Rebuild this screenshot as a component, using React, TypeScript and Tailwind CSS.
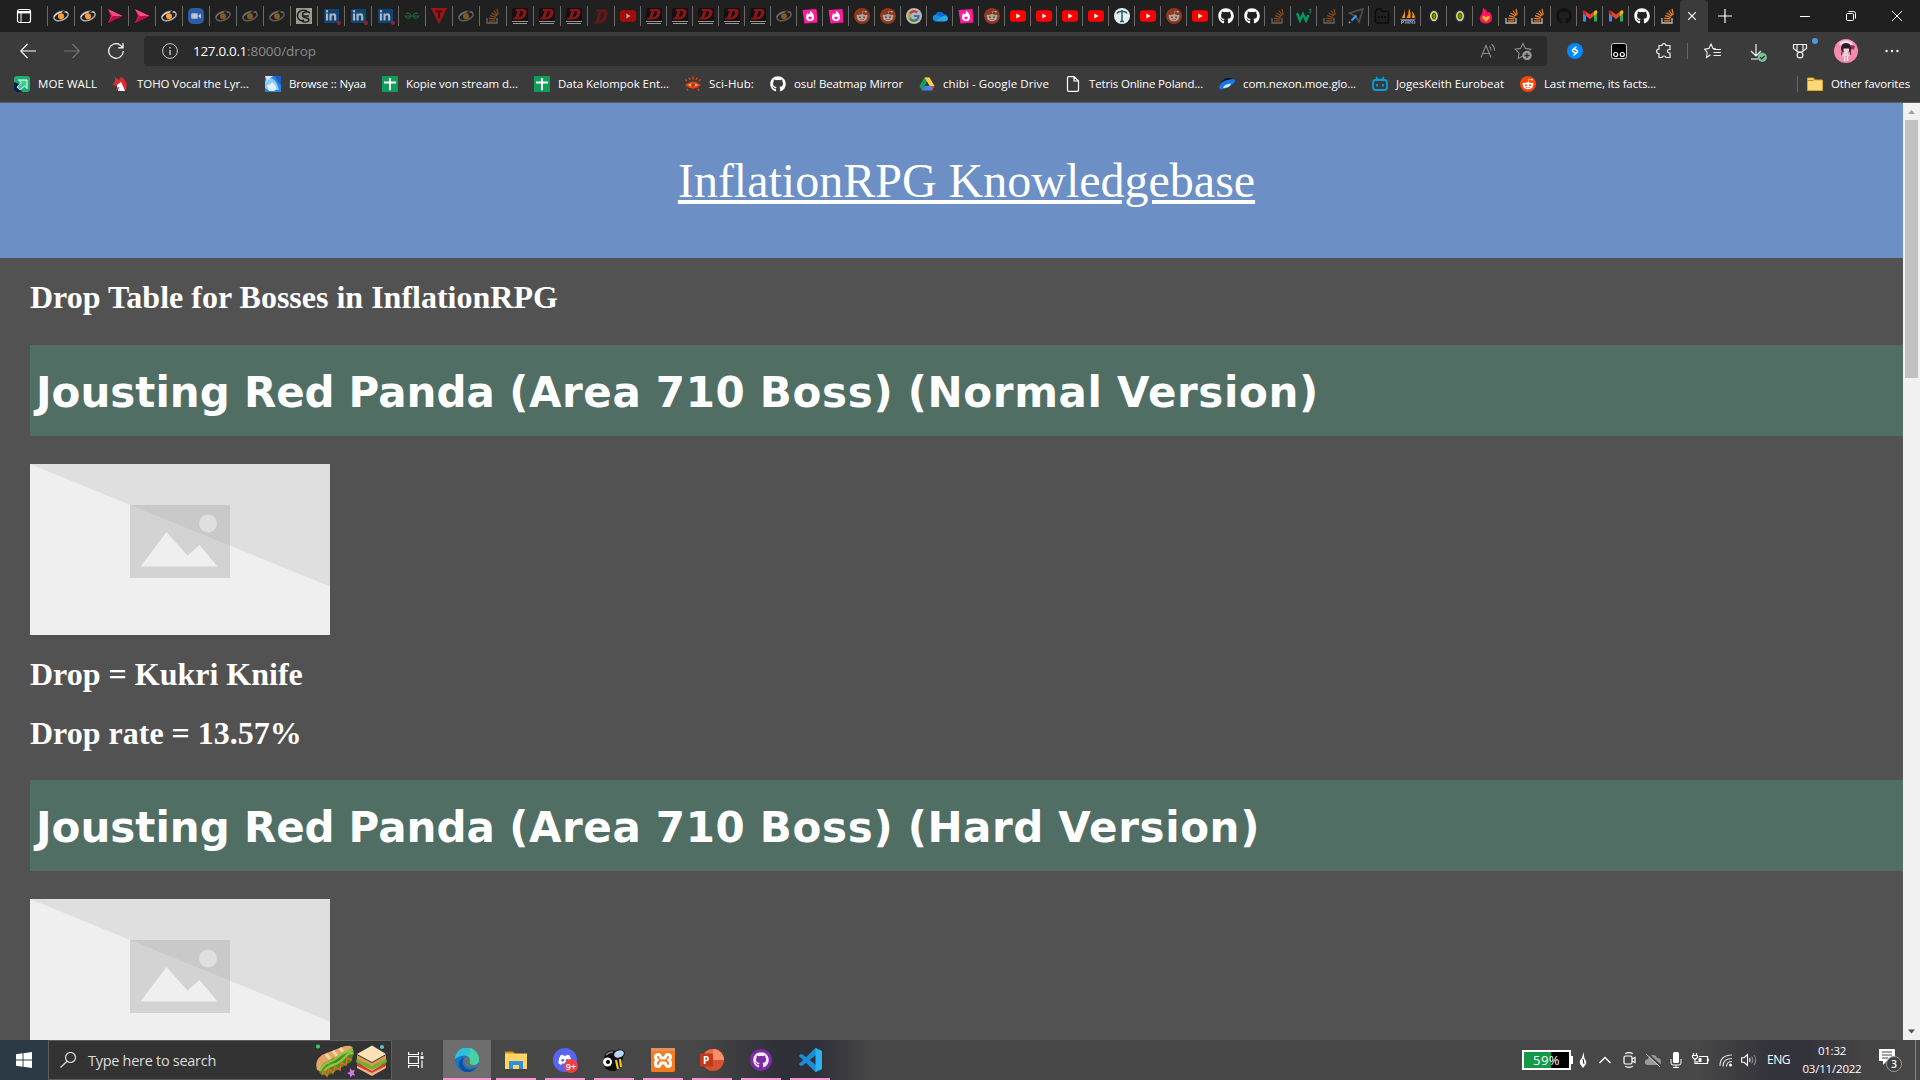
import React, { useLayoutEffect, useRef } from 'react';
import { FaGithub, FaRedditAlien, FaLinkedinIn } from 'react-icons/fa';

/* Single-line text whose tracking is tuned so the line has the given width. */
function FitText({ text, width, className = '' }: { text: string; width: number; className?: string }) {
  const ref = useRef<HTMLSpanElement>(null);
  useLayoutEffect(() => {
    const el = ref.current;
    if (!el) return;
    const fit = () => {
      el.style.letterSpacing = '0px';
      const natural = el.getBoundingClientRect().width;
      el.style.letterSpacing = `${(width - natural) / text.length}px`;
    };
    fit();
    document.fonts?.ready.then(fit);
  }, [text, width]);
  return (
    <span ref={ref} className={`inline-block shrink-0 whitespace-pre ${className}`}>
      {text}
    </span>
  );
}

/* ---------- favicons ---------- */

const Eye = ({ dim }: { dim?: boolean }) => (
  <svg viewBox="0 0 16 16" className={`size-4 ${dim ? 'opacity-45' : ''}`}>
    <g transform="rotate(-20 8 8)" fill="none">
      <ellipse cx="8" cy="8" rx="7.4" ry="4.3" stroke="#aaa" strokeWidth="1.5" />
      <path d="M1 6.6C3 4 12 3 15 7" stroke="#ddd" strokeWidth="1" />
    </g>
    <circle cx="8" cy="8.2" r="3" fill="#ff9d2e" />
    <path d="M14 1.5 9 4.5" stroke="#202020" strokeWidth="1.4" />
  </svg>
);

const Play = () => (
  <svg viewBox="0 0 16 16" className="size-4">
    <path d="M1 1.2 15.5 8 1 15l3-7Z" fill="#e8205c" />
    <path d="M1 1.2 15.5 8H6Z" fill="#ff4f82" />
    <path d="M1 15 6 8h9.5Z" fill="#b90d43" />
  </svg>
);

const Zoom = () => (
  <svg viewBox="0 0 16 16" className="size-4">
    <rect width="16" height="16" rx="5" fill="#2c5da8" />
    <rect x="3.2" y="5.2" width="6.6" height="5.6" rx="1.3" fill="#b9c3d2" />
    <path d="m10.4 7.2 2.6-1.7v5l-2.6-1.7Z" fill="#b9c3d2" />
  </svg>
);

const Monogram = () => (
  <svg viewBox="0 0 16 16" className="size-4">
    <rect width="16" height="16" fill="#9b9b94" />
    <g fill="none" stroke="#191919" strokeWidth="1.4">
      <path d="M11 3C6 .5 1 4 1.500 8S5 13.500 8 12" />
      <path d="M14 5C11 2.500 6 4 6.500 7.500s6 1.500 6.500 4-5 3.500-7 1.500M6 8h7" />
    </g>
  </svg>
);

const LinkedIn = () => (
  <span className="relative flex h-3.5 w-[15px] items-center justify-center bg-[#0e4478]">
    <FaLinkedinIn className="size-3 text-[#b0b4b8]" />
    <span className="absolute -right-0.5 -bottom-0.5 size-1 rounded-full bg-[#9c1e24]" />
  </span>
);

const Geeks = () => (
  <svg viewBox="0 0 16 16" className="size-4" fill="none" stroke="#1d5e33" strokeWidth="1.200">
    <path d="M2.300 5.800A2.600 2.600 0 1 1 1.500 8.200H14.500A2.600 2.600 0 1 1 13.700 5.800" />
  </svg>
);

const RedT = () => (
  <svg viewBox="0 0 16 16" className="size-4">
    <path d="M0 0h16L8 16Z" fill="#a01418" />
    <path d="M4.500 2.500h7v1.800H9v6H7v-6H4.500Z" fill="#3a0c0c" />
  </svg>
);

const Stack = ({ dim }: { dim?: boolean }) => (
  <svg viewBox="0 0 16 16" className={`size-4 ${dim ? 'opacity-45' : ''}`} fill="none">
    <path d="M2 10v5h10v-5" stroke="#bcbbbb" strokeWidth="1.3" />
    <path d="M4 12.800h6.300M4.200 10.300l6.200.6M5 7.700l5.900 1.700M6.500 5l5.200 3.100M8.900 2.500l3.600 4.800M12 .8l1.200 5.800" stroke="#f48024" strokeWidth="1.200" />
  </svg>
);

const Dee = ({ dim }: { dim?: boolean }) => (
  <svg viewBox="0 0 16 16" className={`size-4 ${dim ? 'opacity-60' : ''}`}>
    {!dim && <rect width="16" height="16" rx="2" fill="#111" />}
    <g transform={dim ? 'translate(0 0) scale(1 1.35)' : ''}>
      <path fillRule="evenodd" d="M4 1h7.500q4 .3 3 4-1.200 5.800-7 6.500H1l.6-2h1.600L5.500 3H3.400ZM8.700 3 6.400 9.500q3.600-.4 4.700-4.500.5-2-2.400-2Z" fill="#8d1418" />
    </g>
    {!dim && <path d="M0 13.500h16M1 15.500h14" stroke="#999" strokeWidth="1" />}
  </svg>
);

const YouTube = ({ dim }: { dim?: boolean }) => (
  <svg viewBox="0 0 16 16" className={`size-4 ${dim ? 'opacity-60' : ''}`}>
    <rect y="2.200" width="16" height="11.600" rx="2.800" fill="#f00" />
    <path d="m6.300 5.600 4.300 2.400-4.300 2.400Z" fill="#fff" />
  </svg>
);

const flame = 'M7.800 2.500c.8 2-.2 3-.9 4C6.300 6 6 5.600 5.800 5 4.500 6.500 4 7.800 4 9a4 4 0 0 0 8 .2C12.200 6.500 10.400 4.500 7.800 2.500Z';
const Tinder = () => (
  <svg viewBox="0 0 16 16" className="size-4">
    <path d="m.5 2 14-1 1 13.500-13 1Z" fill="#ff1d9b" />
    <path d={flame} fill="#fff" />
    <path d="M8 12 6.200 9.800q0-1.200 1-1.200L8 9.300l.8-.7q1 0 1 1.200Z" fill="#ff1d9b" />
  </svg>
);

const Flame = () => (
  <svg viewBox="0 0 16 16" className="size-4">
    <path d="M5 0c4 2 4 3.500 4.300 5L11 3.700c2.200 2 3.300 4 3 7a6.200 5.500 0 0 1-12.300 0C1.700 8 3.500 7 4 5.500 4.500 4 4.800 2 5 0Z" fill="#ff1464" />
    <path d="M8 14 4.300 10q-.3-2.200 1.700-2.200L8 9.300l2-1.500q2 0 1.700 2.200Z" fill="#ffb62a" />
  </svg>
);

const Reddit = ({ dim }: { dim?: boolean }) => (
  <span className={`flex size-4 items-center justify-center rounded-full ${dim ? 'bg-[#91371c] text-[#a9a9a9]' : 'bg-[#ff4500] text-white'}`}>
    <FaRedditAlien className="size-3" />
  </span>
);

const Google = () => (
  <svg viewBox="0 0 16 16" className="size-4 opacity-75" fill="none" strokeWidth="2.200">
    <circle cx="8" cy="8" r="8" fill="#e8e8e8" />
    <path d="M11.200 4.500A4.600 4.600 0 0 0 4 5.700" stroke="#ea4335" />
    <path d="M4 5.700a4.600 4.600 0 0 0 0 4.600" stroke="#fbbc05" />
    <path d="M4 10.300a4.600 4.600 0 0 0 7 1.300" stroke="#34a853" />
    <path d="M11 11.600A4.600 4.600 0 0 0 12.600 8H8" stroke="#4285f4" />
  </svg>
);

const OneDrive = () => (
  <svg viewBox="0 0 16 16" className="size-4">
    <path d="M3.500 13.200a3.400 3.400 0 0 1-.3-6.500A5 5 0 0 1 12 6a3.700 3.700 0 0 1 1 7.200Z" fill="#0a6fd0" />
    <path d="M3 13.200a3.400 3.400 0 0 1 .2-6.500q2 0 4 1.600l6 4.900Z" fill="#1490df" />
    <path d="M4 13.200 10 8.500q5-2 6 1.700a3 3 0 0 1-3 3Z" fill="#28a8ea" />
  </svg>
);

const RoundT = () => (
  <svg viewBox="0 0 16 16" className="size-4">
    <circle cx="8" cy="8" r="8" fill="#e4eef0" />
    <path d="M3 5.500q1-2.200 5-2.200t5 2.200M8 2v12M6 13.500h4" fill="none" stroke="#21605e" strokeWidth="1.500" />
  </svg>
);

const W3 = () => (
  <svg viewBox="0 0 16 16" className="size-4" fill="none" stroke="#059862">
    <path d="m1 5 3 7.500L7 6l3 6.500L12.500 7" strokeWidth="2.400" />
    <path d="M12.800 1.500h2.400l-1.300 1.400q1.500.2 1 1.600-.8 1-2.100.3" strokeWidth=".9" />
  </svg>
);

const Plane = () => (
  <svg viewBox="0 0 16 16" className="size-4" fill="none">
    <path d="M1.500 5 15 1l-4 13-3.300-5.500Z" stroke="#4a4f55" strokeWidth="1.800" />
    <path d="m8.500 7.500-5 5" stroke="#3ba0e8" strokeWidth="2" />
    <path d="m2.200 13.800-1.200 1.200" stroke="#3ba0e8" strokeWidth="2" />
  </svg>
);

const DarkFolder = () => (
  <svg viewBox="0 0 16 16" className="size-4" fill="none" stroke="#0c0c0c" strokeWidth="1.400">
    <path d="M1.700 3q0-2 2-2H7l1 2.500h5.500q1 0 1 1V13q0 2-2 2h-9q-2 0-2-2Z" />
    <path d="M4 9h2m1 0h2m1 0h2" strokeWidth="1.800" />
  </svg>
);

const Sails = () => (
  <svg viewBox="0 0 16 16" className="size-4">
    <path d="M5 1v9H1.500Q4 7 5 1ZM9 0q2.500 5 1.500 10H6.500Q9 6 9 0ZM12 3q3 3 3.300 7h-3.500Q13 7 12 3Z" fill="#f29111" />
    <path d="M0 11h16l-2 2H2Z" fill="#777a9a" />
    <path d="M1.500 16v-3.500h2v2h-2m4.300-2V16m2.400 0v-3.500M5.800 14.200h2.400M10 16v-3l1.300 1.500L12.700 13v3m2 0v-3" stroke="#9193b4" strokeWidth="1" fill="none" />
  </svg>
);

const YellowBadge = () => (
  <svg viewBox="0 0 16 16" className="size-4">
    <ellipse cx="8" cy="8" rx="4.600" ry="6" fill="#e9e225" stroke="#17247d" strokeWidth="1.300" />
    <ellipse cx="8" cy="8" rx="1.800" ry="3" fill="#8b8a25" stroke="#333b20" />
  </svg>
);

const Gmail = () => (
  <svg viewBox="0 0 16 16" className="size-4">
    <path d="M1 4v9.500h3V6Z" fill="#4285f4" />
    <path d="M12 6v7.500h3V4Z" fill="#34a853" />
    <path d="M12 3.500V8l3.300-3V4q0-2.500-2-1.600Z" fill="#fbbc04" />
    <path d="M4 3.500 8 6.600l4-3.100V8l-4 3-4-3Z" fill="#ea4335" />
    <path d="M.7 4v1L4 8V3.500L2.700 2.400Q.7 1.500.7 4Z" fill="#c5221f" />
  </svg>
);

const tabs: React.ReactNode[] = [
  <Eye />, <Eye />, <Play />, <Play />, <Eye />, <Zoom />, <Eye dim />, <Eye dim />, <Eye dim />, <Monogram />,
  <LinkedIn />, <LinkedIn />, <LinkedIn />, <Geeks />, <RedT />, <Eye dim />, <Stack dim />, <Dee />, <Dee />, <Dee />, <Dee dim />,
  <YouTube dim />, <Dee />, <Dee />, <Dee />, <Dee />, <Dee />, <Eye dim />, <Tinder />, <Tinder />, <Reddit dim />, <Reddit dim />,
  <Google />, <OneDrive />, <Tinder />, <Reddit dim />, <YouTube />, <YouTube />, <YouTube />, <YouTube />, <RoundT />, <YouTube />,
  <Reddit dim />, <YouTube />, <FaGithub className="size-4 text-white" />, <FaGithub className="size-4 text-white" />, <Stack dim />,
  <W3 />, <Stack dim />, <Plane />, <DarkFolder />, <Sails />, <YellowBadge />, <YellowBadge />, <Flame />, <Stack />, <Stack />,
  <FaGithub className="size-4 text-[#111]" />, <Gmail />, <Gmail />, <FaGithub className="size-4 text-white" />, <Stack />,
];

function TabStrip() {
  return (
    <div className="flex h-8 bg-[#202020]">
      <div className="flex w-[47px] shrink-0 items-center justify-center">
        <svg viewBox="0 0 16 16" className="size-4" fill="none" stroke="#fff">
          <rect x="1.500" y="1.500" width="13" height="13" rx="2" strokeWidth="1.200" />
          <path d="M1.500 4.200h13" strokeWidth="2.400" />
          <path d="M5 4.500v10" />
        </svg>
      </div>
      {tabs.map((icon, i) => (
        <div key={i} className={`flex h-8 shrink-0 items-center ${i < 21 ? 'w-[27px]' : 'w-[26px]'}`}>
          <div className="h-5 w-px bg-[#6a6a6a]" />
          <div className="flex flex-1 items-center justify-center">{icon}</div>
        </div>
      ))}
      <div className="flex w-7 shrink-0 items-center justify-center rounded-t-[4px] bg-[#3b3b3b] pr-1">
        <svg viewBox="0 0 8 8" className="size-2" stroke="#fff" strokeWidth="1.100"><path d="m0 0 8 8M8 0 0 8" /></svg>
      </div>
      <div className="ml-[10px] flex w-[15px] items-center">
        <svg viewBox="0 0 14 14" className="size-3.5" stroke="#fff" strokeWidth="1.200"><path d="M7 0v14M0 7h14" /></svg>
      </div>
      <div className="ml-auto flex items-center">
        <div className="flex w-[46px] justify-center"><div className="h-px w-2.5 bg-white" /></div>
        <div className="flex w-[46px] justify-center">
          <svg viewBox="0 0 10 10" className="size-2.5" fill="none" stroke="#fff"><rect x=".5" y="2.500" width="7" height="7" rx="1" /><path d="M2.500.5h5q2 0 2 2v5" /></svg>
        </div>
        <div className="flex w-[46px] justify-center">
          <svg viewBox="0 0 10 10" className="size-2.5" stroke="#fff"><path d="m0 0 10 10M10 0 0 10" /></svg>
        </div>
      </div>
    </div>
  );
}

function Toolbar() {
  return (
    <div className="flex h-[38px] items-center bg-[#3b3b3b] text-white">
      <div className="flex w-[144px] shrink-0 items-center pl-5">
        <svg viewBox="0 0 16 16" className="size-4" fill="none" stroke="#fff" strokeWidth="1.100"><path d="M16 8H.7M7.500 1 .7 8l6.800 7" /></svg>
        <svg viewBox="0 0 16 16" className="ml-7 size-4" fill="none" stroke="#777" strokeWidth="1.100"><path d="M0 8h15.300M8.500 1l6.800 7-6.800 7" /></svg>
        <svg viewBox="0 0 16 16" className="ml-7 size-4" fill="none" stroke="#fff" strokeWidth="1.200"><path d="M15.300 8A7.300 7.300 0 1 1 12 1.900l2.800 2.600M15 0v4.800h-4.800" /></svg>
      </div>
      <div className="flex h-[30px] w-[1403px] items-center rounded-[4px] bg-[#2b2b2b] pr-[15px] pl-[18px]">
        <svg viewBox="0 0 16 16" className="size-4" fill="none" stroke="#ccc"><circle cx="8" cy="8" r="7.400" /><path d="M8 7v5M8 4v1.600" strokeWidth="1.400" /></svg>
        <div className="ml-[15px] flex font-['Open_Sans',sans-serif] text-[13.5px] leading-5">
          <FitText text="127.0.0.1" width={54} />
          <FitText text=":8000/drop" width={69} className="text-[#8c8c8c]" />
        </div>
        <svg viewBox="0 0 16 16" className="ml-auto size-4" fill="none" stroke="#8c8c8c" strokeWidth="1.100"><path d="m1 14.500 5-12 5 12M2.800 10.500h6.400M9.500 3.500q1.800 1.500 1.500 4M11.500 1.200q3.200 2.300 3 6.500" /></svg>
        <svg viewBox="0 0 18 18" className="ml-[18px] size-[18px]" fill="none" stroke="#8c8c8c" strokeWidth="1.100">
          <path d="m9 14-4.800 2.500.9-5.400L1.200 7.200l5.300-.8L9 1.500l2.500 4.900 5.300.8-1.300 1.400" />
          <circle cx="13" cy="13.500" r="4.700" fill="#999" stroke="none" /><path d="M13 11v5M10.500 13.500h5" stroke="#2b2b2b" strokeWidth="1.300" />
        </svg>
      </div>
      <div className="flex flex-1 items-center pl-5">
        <span className="flex size-4 items-center justify-center rounded-full bg-[#08f]">
          <svg viewBox="0 0 12 12" className="size-3" fill="none" stroke="#fff" strokeWidth="1.500" strokeLinecap="round"><path d="M7 2 4.200 4.200q-1.500 1.400 0 2.500L6.500 8M5 10l2.800-2.200q1.500-1.400 0-2.500L5.500 4" /></svg>
        </span>
        <svg viewBox="0 0 16 16" className="ml-7 size-4"><rect x=".5" y=".5" width="15" height="15" rx="2" fill="#000" stroke="#ccc" /><g fill="none" stroke="#fff" strokeWidth="1.200"><circle cx="4.700" cy="11.500" r="2" /><circle cx="11.300" cy="11.500" r="2" /></g></svg>
        <svg viewBox="0 0 16 16" className="ml-[29px] size-4" fill="none" stroke="#eee" strokeWidth="1.200"><path d="M3 2.500h3Q6 .6 8 .6t2 1.900h4v4q-2.500-.2-2.500 1.700T14 10v4.500h-4q-.2-1.500-2-1.500t-2 1.500H3v-4Q.6 10.500.6 8.300T3 6.200Z" /></svg>
        <div className="ml-[15px] h-4 w-px bg-[#666]" />
        <svg viewBox="0 0 17 16" className="ml-4 h-4 w-[17px]" fill="none" stroke="#eee" strokeWidth="1.100"><path d="m6.500 11.800-4 2.700.7-5L.7 6.200l4.200-.8L7 1l2 4.400 3 .6M9.500 6.500H17M9.500 9.500H17M9.500 12.500H17" /></svg>
        <svg viewBox="0 0 18 18" className="ml-[28px] mt-1 size-[18px]" fill="none"><path d="M7 0v12M2 7l5 5 5-5M2 15h7" stroke="#fff" strokeWidth="1.100" /><circle cx="13.300" cy="13.300" r="4.600" fill="#74c38b" /><path d="m11.200 13.300 1.600 1.500 2.800-3" stroke="#224" strokeWidth="1.200" /></svg>
        <span className="relative ml-[25px]">
          <svg viewBox="0 0 16 16" className="size-4" fill="none" stroke="#eee" strokeWidth="1.200"><path d="M1.500 1.500h13v4L10 9H6L1.500 5.500ZM5 1.500V8m6-6.500V8" /><circle cx="8" cy="12" r="2.900" /></svg>
          <span className="absolute -top-[5px] left-[20px] size-1.5 rounded-full bg-[#4b9adb]" />
        </span>
        <svg viewBox="0 0 24 24" className="ml-[26px] size-6">
          <circle cx="12" cy="12" r="12" fill="#f48bac" />
          <path d="M5 4.500q7-6.500 14 0l-1 2Q12 1 6 6.500Z" fill="#f4dfe8" />
          <path d="M7 10Q7 4 12 4t5.500 6L16 13H8Z" fill="#2a1d2b" />
          <path d="M9.500 9.500h5.500v3q-2.700 1.500-5.500 0Z" fill="#f1d3d6" />
          <path d="m10.500 13-2.500 4.500 4-.5 4 .5-2.500-4.500Z" fill="#e6d2e3" /><path d="m17 6 4 1-1.500 4-3-2Z" fill="#9b2463" />
          <path d="M8.500 10.500 7.500 16m8.500-5.500 1 5.500" stroke="#4a2b45" />
          <path d="M10.700 17.500V22m2.800-4.500V22" stroke="#fff" strokeWidth="1.300" />
        </svg>
        <svg viewBox="0 0 14 4" className="ml-[27px] h-1 w-3.5" fill="#eee"><circle cx="1.600" cy="2" r="1.200" /><circle cx="7" cy="2" r="1.200" /><circle cx="12.400" cy="2" r="1.200" /></svg>
      </div>
    </div>
  );
}

/* ---------- bookmarks ---------- */

const Sheet = () => (
  <svg viewBox="0 0 16 16" className="size-4"><rect width="16" height="16" rx="1" fill="#0f9d58" /><path d="M8 2.200v12M2 6.500h12" stroke="#fff" strokeWidth="2" /></svg>
);

const bookmarks: { icon: React.ReactNode; text: string; width: number; cell: string; gap: string }[] = [
  { text: 'MOE WALL', width: 59, cell: 'w-[99px]', gap: 'gap-2', icon: <svg viewBox="0 0 16 16" className="size-4"><rect width="16" height="16" rx="3" fill="#1fae72" /><path d="m0 6 5 2 3 8H3q-3 0-3-3Z" fill="#131b4d" /><path d="M4.500 4H13v8.500L10.500 10 6 14l-3-3 4.500-4.500Z" fill="#36cf93" stroke="#fff" /></svg> },
  { text: 'TOHO Vocal the Lyr...', width: 112, cell: 'w-[152px]', gap: 'gap-2', icon: <svg viewBox="0 0 16 16" className="size-4"><path d="m2 1 4 3 2-3 3 2 3 5-1 6H3l2-4-5-1 2-4Z" fill="#e02a35" /><path d="m4 9 4-3 2 4 2 5H5l1-4-2 .5Z" fill="#fff" /></svg> },
  { text: 'Browse :: Nyaa', width: 77, cell: 'w-[117px]', gap: 'gap-2', icon: <svg viewBox="0 0 16 16" className="size-4"><rect width="16" height="16" fill="#2a86e0" /><path d="M0 5q5-4 8-2t4 5 2 6H3L0 12Z" fill="#8ccbf7" /><path d="M2 9q4 0 5-3l3 3q3 4-1 6H4Z" fill="#e3f2ff" /><path d="M10 0h6v9q-4-3-6-9Z" fill="#1a5fc2" /><path d="M0 0h8L2 5Z" fill="#cfe8ff" /></svg> },
  { text: 'Kopie von stream d...', width: 112, cell: 'w-[152px]', gap: 'gap-2', icon: <Sheet /> },
  { text: 'Data Kelompok Ent...', width: 111, cell: 'w-[151px]', gap: 'gap-2', icon: <Sheet /> },
  { text: 'Sci-Hub:', width: 45, cell: 'w-[85px]', gap: 'gap-2', icon: <svg viewBox="0 0 16 16" className="size-4"><path d="M0 9q8-7 16 0-8 7-16 0Z" fill="#e5401f" /><path d="M3 9q5-3.500 10 0-5 3.500-10 0Z" fill="#ffc531" /><circle cx="8" cy="9" r="2" fill="#c32c16" /><path d="m2 5-1.500-1.500M5 4 4 1.500M8 3.500v-3M11 4l1-2.500M14 5l1.500-1.500M3 13l-1 1.500M13 13l1 1.500" stroke="#e5401f" strokeWidth="1.400" /></svg> },
  { text: 'osu! Beatmap Mirror', width: 109, cell: 'w-[149px]', gap: 'gap-2', icon: <FaGithub className="size-4 text-white" /> },
  { text: 'chibi - Google Drive', width: 106, cell: 'w-[146px]', gap: 'gap-2', icon: <svg viewBox="0 0 16 16" className="size-4"><path d="M5.500 1.500h5L8 6 3 14.500.5 10Z" fill="#17a05d" /><path d="M5.500 1.500h5l5 8.500H10.500Z" fill="#ffcd42" /><path d="M5.500 10h10L13 14.500H3Z" fill="#4285f4" /><path d="M12.800 10h2.700L13 14.500Z" fill="#ea4335" /><path d="m8 5.800 2.500 4.200h-5Z" fill="#3b3b3b" /></svg> },
  { text: 'Tetris Online Poland...', width: 114, cell: 'w-[154px]', gap: 'gap-2', icon: <svg viewBox="0 0 16 16" className="size-4" fill="none" stroke="#fff" strokeWidth="1.200"><path d="M2.500 2q0-1.300 1.300-1.300H9L13.500 5v9q0 1.300-1.300 1.300H3.800q-1.300 0-1.300-1.300ZM9 .7V5h4.500" /></svg> },
  { text: 'com.nexon.moe.glo...', width: 113, cell: 'w-[153px]', gap: 'gap-2', icon: <svg viewBox="0 0 16 16" className="size-4"><path d="M0 11Q4 1 14 3q5 2-2 6.500T1 13.500Z" fill="#1478e8" /><path d="M1 7Q7 0 14 3 7 3.500 1 7Z" fill="#071426" /><path d="M4 12q1-4 8-4.500Q11 12 4 12Z" fill="#d8edff" /></svg> },
  { text: 'JogesKeith Eurobeat', width: 108, cell: 'w-[148px]', gap: 'gap-2', icon: <svg viewBox="0 0 16 16" className="size-4" fill="none" stroke="#049fd8" strokeWidth="1.800"><rect x="1" y="4" width="14" height="10" rx="2.500" /><path d="m4 1 2 2.500M12 1l-2 2.500M5 8v2.500M11 8v2.500" /></svg> },
  { text: 'Last meme, its facts...', width: 112, cell: 'w-[152px]', gap: 'gap-2', icon: <Reddit /> },
];

function Bookmarks() {
  return (
    <div className="flex h-[33px] items-center border-b border-[#5c5c5c] bg-[#3b3b3b] pb-[4px] pl-[14px] font-['Open_Sans',sans-serif] text-[11.5px] leading-4 text-white">
      {bookmarks.map((b) => (
        <div key={b.text} className={`flex shrink-0 items-center ${b.cell} ${b.gap}`}>
          <span className="shrink-0">{b.icon}</span>
          <FitText text={b.text} width={b.width} />
        </div>
      ))}
      <div className="ml-auto flex items-center pr-[10px]">
        <div className="mr-[9px] h-4 w-px bg-[#666]" />
        <svg viewBox="0 0 16 16" className="mr-2 size-4"><path d="M.5 2h6l1.500 2h7.500v10.500H.5Z" fill="#ffd978" stroke="#d9a520" /><path d="M.5 4.500H6L8 3" stroke="#c08c10" fill="none" /></svg>
        <FitText text="Other favorites" width={79} />
      </div>
    </div>
  );
}

/* ---------- page ---------- */

const Placeholder = () => (
  <svg viewBox="0 0 300 171" className="mt-7 block h-[171px] w-[300px]">
    <path d="M0 0h300v171H0Z" fill="#efefef" />
    <path d="M0 0h300v122.500Z" fill="#dfdfdf" />
    <path d="M100 41h100v73H100Z" fill="#d3d3d3" />
    <path d="M100 41h100v40.700Z" fill="#c9c9c9" />
    <circle cx="178" cy="59.500" r="9" fill="#dfdfdf" />
    <path d="m110.500 102.500 26-34.500 21 23.500 12-10.500 18 21.500Z" fill="#efefef" />
  </svg>
);

/* Word widths of the heading face at 42px. */
const wordWidths: Record<string, number> = {
  Jousting: 199.7, Red: 90.1, Panda: 146.2, '(Area': 132.2, '710': 89.6,
  'Boss)': 133.5, '(Normal': 195, '(Hard': 136.2, 'Version)': 201.7,
};

function Boss({ name }: { name: string }) {
  return (
    <section>
      <h1 className="flex h-[91px] gap-[14.4px] bg-[#516e65] pt-0.5 font-['DejaVu_Sans',Verdana,sans-serif] text-[42px] leading-[91px] font-bold">
        {name.split(' ').map((word) => (
          <FitText key={word} text={word} width={wordWidths[word]} className={word === 'Jousting' ? 'pl-[6px]' : ''} />
        ))}
      </h1>
      <Placeholder />
      <p className="mt-[21px] text-[32px] leading-[37px] font-bold">Drop = Kukri Knife</p>
      <p className="mt-[22px] mb-7 text-[32px] leading-[37px] font-bold">Drop rate = 13.57%</p>
    </section>
  );
}

function Page() {
  return (
    <div className="flex h-[937px] overflow-hidden">
      <main className="h-[937px] w-[1903px] overflow-hidden bg-[#525252] font-['Liberation_Serif','Times_New_Roman',serif] text-white">
        <header className="flex h-[155px] justify-center bg-[#6c8fc6] pt-[50px] pl-[30px]">
          <a className="text-[48px] leading-[55px] whitespace-nowrap underline">InflationRPG Knowledgebase</a>
        </header>
        <div className="pl-[30px]">
          <h2 className="pt-[21px] pb-[29px] text-[32px] leading-[37px] font-bold">Drop Table for Bosses in InflationRPG</h2>
          <Boss name="Jousting Red Panda (Area 710 Boss) (Normal Version)" />
          <section>
            <h1 className="flex h-[91px] gap-[14.4px] bg-[#516e65] pt-0.5 font-['DejaVu_Sans',Verdana,sans-serif] text-[42px] leading-[91px] font-bold">
              {'Jousting Red Panda (Area 710 Boss) (Hard Version)'.split(' ').map((word) => (
                <FitText key={word} text={word} width={wordWidths[word]} className={word === 'Jousting' ? 'pl-[6px]' : ''} />
              ))}
            </h1>
            <Placeholder />
          </section>
        </div>
      </main>
      <div className="flex w-[17px] flex-col items-center bg-[#f1f1f1]">
        <svg viewBox="0 0 17 17" className="size-[17px]" fill="#a3a3a3"><path d="m5 11 3.500-4 3.500 4Z" /></svg>
        <div className="h-[258px] w-[13px] bg-[#c1c1c1]" />
        <svg viewBox="0 0 17 17" className="mt-auto size-[17px]" fill="#505050"><path d="m5 6.500 3.500 4 3.500-4Z" /></svg>
      </div>
    </div>
  );
}

/* ---------- taskbar ---------- */

const SearchArt = () => (
  <svg viewBox="0 0 76 36" className="h-9 w-[76px]">
    <circle cx="4" cy="4.500" r="2" fill="#3ecf63" /><circle cx="68" cy="5" r="2" fill="#58c8dc" />
    <path d="M6 32Q1 22 8 17L32 5q8-1 8 6l-3 9-24 14Z" fill="#4b8a2a" />
    <path d="M3 28Q0 17 10 12L28 5q9-3 11 1L10 21q-4 3-4 8Z" fill="#e6a467" />
    <path d="m12 12 4 5M19 9l4 5M26 6l4 5" stroke="#f8d2a2" strokeWidth="3" />
    <path d="M6 29q3-7 9-9t10-6 14-6M9 31q3-6 10-8t12-8 8-3" stroke="#8cc63f" strokeWidth="2.400" fill="none" />
    <path d="m8 33 2-4 3 5 2-7 4 4 2-6 5 3 1-7 5 2 1-7 5 2" stroke="#e7681f" strokeWidth="1.500" fill="none" />
    <path d="M43 23v3l15 8 14-8v-3Z" fill="#f0b58a" />
    <path d="m43 20 15 9 14-9v4l-14 7-15-7Z" fill="#d33f2c" />
    <path d="m43 16 15 8 14-8 1 4-15 8-16-8Z" fill="#6eb22d" />
    <path d="m43 13 15 8 14-8v4l-14 7-15-7Z" fill="#d89a54" />
    <path d="M43 12 58 3.500 72 12l-14 8Z" fill="#fbe3b6" />
    <path d="m36 26 2 2.500 3-.5-1.500 3 2 2.500-3-.5-2 2.500-.7-3-3-1.500 3-1Z" fill="#d278ee" />
  </svg>
);

const apps: { name: string; icon: React.ReactNode }[] = [
  { name: 'files', icon: <svg viewBox="0 0 24 24" className="size-6"><path d="M1 3.500h8l2 2.500H1Z" fill="#d9950c" /><path d="M1 5.500h22v15.500H1Z" fill="#ffd566" /><path d="M5 13h14v8h-4v-4H9v4H5Z" fill="#2d8fe0" /></svg> },
  { name: 'discord', icon: (
    <span className="relative flex">
      <svg viewBox="0 0 24 24" className="size-6"><circle cx="12" cy="12" r="12" fill="#5865f2" /><path d="M7.500 7.300 10 6.700l.6 1h2.800l.6-1 2.500.6q2.500 4 2 8.200L15.800 17l-1-1.500H9.200L8.200 17l-2.700-1.500q-.5-4.200 2-8.200Z" fill="#fff" /><circle cx="9.700" cy="12.300" r="1.400" fill="#5865f2" /><circle cx="14.300" cy="12.300" r="1.400" fill="#5865f2" /></svg>
      <span className="absolute top-[11px] left-[11px] flex size-3.5 items-center justify-center rounded-full bg-[#ed4245] font-['Open_Sans',sans-serif] text-[9px] leading-none font-semibold text-white">9+</span>
    </span>
  ) },
  { name: 'bee', icon: <svg viewBox="0 0 24 24" className="size-6"><path d="M3 6q5-6 13-2l5 5-2 10-6 4Q3 24 1 15Z" fill="#0b0b0b" /><ellipse cx="17" cy="6" rx="5.500" ry="4" transform="rotate(-18 17 6)" fill="#b9d8f4" stroke="#111" /><circle cx="5.500" cy="14" r="4.500" fill="#fff" /><circle cx="6" cy="14" r="2.100" /><path d="m14 12 2 9M18 11l1 8" stroke="#f5c32c" strokeWidth="2.200" /><path d="M4 7q3-3 7-3" stroke="#888" strokeWidth="1.500" fill="none" /></svg> },
  { name: 'xampp', icon: <svg viewBox="0 0 24 24" className="size-6"><rect width="24" height="24" rx="1.500" fill="#f47b20" /><path d="M0 0h24v3H0Z" fill="#e2925a" /><path d="M7.500 6.500c-4 0-3.500 4-1.500 5.500-2 1.500-2.500 6.500 1 6.500 3 0 2-3.500 3-3.500h4c1 0 0 3.500 3 3.500 3.500 0 3-5 1-6.500 2-1.500 2.500-5.500-1.500-5.500C14 6.500 15 10 14 10h-4C9 10 10 6.500 7.500 6.500Z" fill="none" stroke="#fff" strokeWidth="3" /></svg> },
  { name: 'powerpoint', icon: (
    <span className="relative flex">
      <svg viewBox="0 0 24 24" className="size-6"><circle cx="13" cy="12" r="11" fill="#d35230" /><path d="M13 1a11 11 0 0 1 11 11H13Z" fill="#ff8f6b" /><path d="M13 1v11H2A11 11 0 0 1 13 1Z" fill="#ed6c47" /><rect y="5.500" width="13" height="13" rx="1" fill="#c13b1b" /></svg>
      <span className="absolute top-[6px] left-[3px] font-['Open_Sans',sans-serif] text-[10px] leading-3 font-bold text-white">P</span>
    </span>
  ) },
  { name: 'github', icon: <span className="flex size-[22px] items-center justify-center rounded-full bg-[#7d2aa5]"><FaGithub className="size-4 text-[#f2eaff]" /></span> },
  { name: 'code', icon: <svg viewBox="0 0 24 24" className="size-6"><path d="M17.500 0 24 3v18l-6.500 3L2.500 9.500.8 8l2-2 1.800.5L18 17V7L4.600 17.500l-1.800.5-2-2 1.700-1.500Z" fill="#1a8fd6" /><path d="M17.500 0 24 3v18l-6.500 3V0Z" fill="#2bb0f2" /></svg> },
];

const Edge = () => (
  <svg viewBox="0 0 24 24" className="size-6">
    <circle cx="12" cy="12" r="12" fill="#1478c8" />
    <path d="M0 11A12 12 0 0 1 24 11.500q0 5-5 5.500-5 0-4.500-3 1.500-4-2.500-6Q6 6 0 11Z" fill="#31bfd8" />
    <path d="M15 .4A12 12 0 0 1 24 11.500q0 5-5 5.500-5 0-4.500-3 1.500-4-2.500-6Q16 6 15 .4Z" fill="#4fd889" opacity=".7" />
    <path d="M9 10q-4 6 2 10.500 5 2.500 10.500-1Q17 26 9 23.500 3 20 4 14q1.500-4 5-4Z" fill="#0c4f9c" />
    <path d="M12.500 8.500q3 2 2 5.500-.5 3 4 3.200 2 .1 3.800-.8-1.500 3-5.300 3-6 0-8-5-.8-3.500 3.500-5.900Z" fill="#6e6e6e" />
  </svg>
);

function Taskbar() {
  return (
    <div className="flex h-10 bg-[linear-gradient(90deg,#474747_0,#474747_700px,#2f2f38_780px,#2f2f38_815px,#474747_870px,#474747_1700px,#33333b_1770px,#33333b_1810px,#444_1860px,#484848_100%)] font-['Open_Sans',sans-serif] text-white">
      <div className="flex w-12 shrink-0 items-center justify-center bg-[#2b3a44]">
        <svg viewBox="0 0 16 16" className="size-4" fill="#fff"><path d="M0 2.200 6.600 1.300v6.200H0ZM7.500 1.200 16 0v7.500H7.500ZM0 8.400h6.600v6.300L0 13.800ZM7.500 8.400H16V16l-8.500-1.200Z" /></svg>
      </div>
      <div className="flex w-[344px] shrink-0 items-center border border-[#5e5e5e] bg-[#333]">
        <svg viewBox="0 0 16 16" className="ml-[11px] size-4" fill="none" stroke="#ddd" strokeWidth="1.200"><circle cx="10.500" cy="5.500" r="5" /><path d="M7 9.200.5 15.500" /></svg>
        <FitText text="Type here to search" width={128} className="ml-3 pt-px text-[14.5px] leading-5 text-[#ddd]" />
        <div className="ml-auto pr-px"><SearchArt /></div>
      </div>
      <div className="flex w-[51px] shrink-0 items-center pl-4">
        <svg viewBox="0 0 16 16" className="size-4" fill="none" stroke="#fff" strokeWidth="1.200"><path d="M.6 0v2.500h9.800V0M.6 16v-2.500h9.800V16M.6 4.500h9.800v7H.6ZM14 0v3M14 8.500V16" /><path d="M12.500 5.500h3" strokeWidth="2.800" /></svg>
      </div>
      <div className="flex h-10 w-12 shrink-0 items-center justify-center border-b-2 border-[#ff94d4] bg-[#6e6e6e] pt-0.5"><Edge /></div>
      <div className="flex gap-[9px] pl-[5px]">
        {apps.map((a) => (
          <div key={a.name} className="flex h-10 w-10 items-center justify-center border-b-2 border-[#ff94d4] pt-0.5">{a.icon}</div>
        ))}
      </div>
      <div className="ml-auto flex w-[398px] items-center">
        <div className="relative flex h-5 w-[49px] shrink-0 items-center justify-center border-2 border-white bg-[linear-gradient(90deg,#159947_59%,#000_59%)]">
          <FitText text="59%" width={27} className="text-[13px] leading-4" />
        </div>
        <div className="h-2 w-0.5 bg-white" />
        <svg viewBox="0 0 8 16" className="ml-[6px] h-4 w-2" fill="#fff"><path d="M4.500 0 3 6Q0 8 1 12l3 4 3-4q1-3-1.500-5.500Z" /><path d="m4 7 1 5" stroke="#222" /></svg>
        <svg viewBox="0 0 12 8" className="ml-[12px] h-2 w-3" fill="none" stroke="#fff" strokeWidth="1.300"><path d="m.5 7 5.500-5.500L11.500 7" /></svg>
        <svg viewBox="0 0 14 16" className="ml-3 h-4 w-3.5" fill="none" stroke="#fff" strokeWidth="1.200"><rect x="1" y="4" width="8" height="8" rx="1.500" /><path d="m9 7 3-1.500v5L9 9M2 1.700q4-2 8 0M2 14.300q4 2 8 0" /></svg>
        <svg viewBox="0 0 18 14" className="ml-[7px] h-3.5 w-[18px]"><path d="M4 12q-4 0-3-4 1-2 3-2 1-4 5-4 3 0 4 3 4 0 4 4 0 3-2 3Z" fill="#999" /><path d="m3 0 14 13" stroke="#444" strokeWidth="2" /><path d="m2 1 14 13" stroke="#ccc" /></svg>
        <svg viewBox="0 0 12 16" className="ml-[8px] h-4 w-3" fill="#fff"><rect x="3" width="6" height="11" rx="1.500" /><path d="M1 7v4q0 2 2 2h6q2 0 2-2V7M6 13v2.500M3 15.500h6" fill="none" stroke="#fff" /></svg>
        <svg viewBox="0 0 17 16" className="ml-2.5 h-4 w-[17px]" fill="none" stroke="#fff" strokeWidth="1.200"><path d="M7 4.500h8.500v7H5V9M1.500 1v2.500M4.500 1v2.500M.5 3.500h5v2L3 7.500.5 5.500ZM3 7.500v4h2M16.300 6.500v3" /><path d="M6.500 6h3v4h-3Z" fill="#fff" stroke="none" /></svg>
        <svg viewBox="0 0 14 14" className="ml-[10px] size-3.5" fill="none" stroke="#ddd" strokeWidth="1.200"><path d="M1 13Q1 2 13 2M4 13.500Q4 5.500 13 5.500M7.500 13.500q0-5 5.500-5" /><circle cx="11.500" cy="12" r="1.500" fill="#fff" stroke="none" /></svg>
        <svg viewBox="0 0 16 14" className="ml-[8px] h-3.5 w-4" fill="none" stroke="#fff" strokeWidth="1.100"><path d="M.6 4.700h2.500L6.500 1.500v11L3.100 9.300H.6ZM8.500 5q1.300 2 0 4" /><path d="M10.500 3.500q2.500 3.500 0 7M13 2q3.500 5 0 10" stroke="#888" /></svg>
        <FitText text="ENG" width={23} className="ml-[10px] text-[12px] leading-4" />
        <div className="ml-[12px] flex w-[60px] flex-col items-center text-[11.5px] leading-[18px]">
          <FitText text="01:32" width={28} />
          <FitText text="03/11/2022" width={59} />
        </div>
        <div className="relative ml-[17px] size-6">
          <svg viewBox="0 0 16 16" className="mt-px size-4"><path d="M0 0h16v12H8l-4 4v-4H0Z" fill="#fff" /><path d="M3 3h10M3 6h10M3 9h6" stroke="#444" /></svg>
          <span className="absolute top-[8px] left-[7px] flex size-4 items-center justify-center rounded-full border border-[#999] bg-[#404040] text-[10.5px] leading-none font-semibold">3</span>
        </div>
        <div className="ml-auto h-10 w-px self-stretch bg-[#888]" />
        <div className="w-1" />
      </div>
    </div>
  );
}

export default function App() {
  return (
    <div className="flex h-[1080px] w-[1920px] flex-col overflow-hidden">
      <TabStrip />
      <Toolbar />
      <Bookmarks />
      <Page />
      <Taskbar />
    </div>
  );
}
